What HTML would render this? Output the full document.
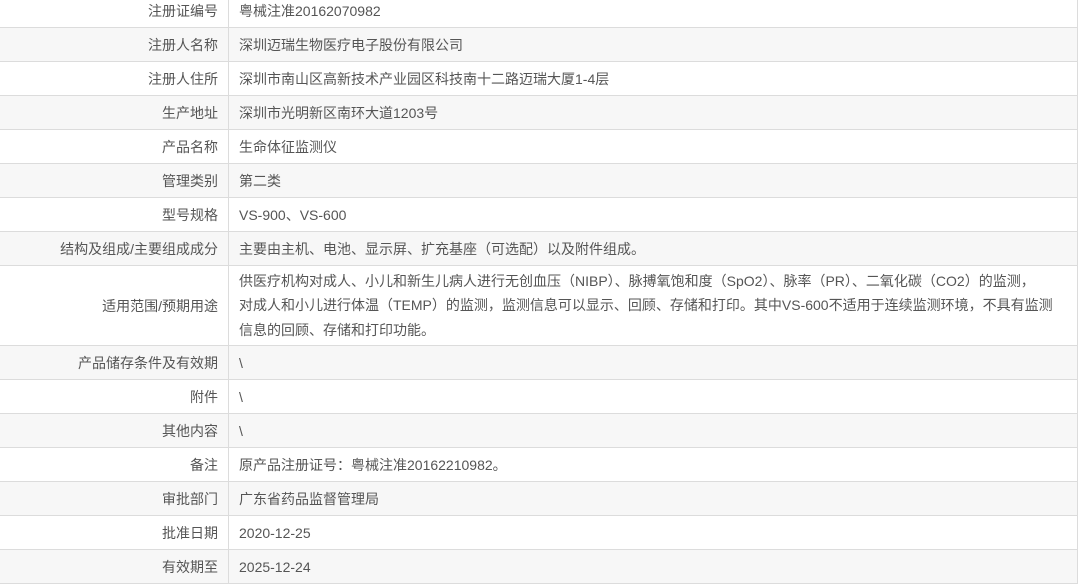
<!DOCTYPE html>
<html><head><meta charset="utf-8"><style>
html,body{margin:0;padding:0;background:#fff;width:1081px;height:588px;overflow:hidden}
table{position:absolute;left:0;top:-7px;width:1078px;border-collapse:collapse;font-family:"Liberation Sans","Noto Sans CJK SC",sans-serif;font-size:14px;color:#555}
td{border:1px solid #dcdcdc;height:33px;padding:0;line-height:22px}
td.l{width:218px;text-align:right;padding-right:10px;border-left:none}
td.v{padding-left:10px;padding-right:10px;white-space:nowrap}
tr:nth-child(even){background:#f7f7f7}
</style></head><body>
<table>
<tr><td class="l">注册证编号</td><td class="v">粤械注准20162070982</td></tr>
<tr><td class="l">注册人名称</td><td class="v">深圳迈瑞生物医疗电子股份有限公司</td></tr>
<tr><td class="l">注册人住所</td><td class="v">深圳市南山区高新技术产业园区科技南十二路迈瑞大厦1-4层</td></tr>
<tr><td class="l">生产地址</td><td class="v">深圳市光明新区南环大道1203号</td></tr>
<tr><td class="l">产品名称</td><td class="v">生命体征监测仪</td></tr>
<tr><td class="l">管理类别</td><td class="v">第二类</td></tr>
<tr><td class="l">型号规格</td><td class="v">VS-900、VS-600</td></tr>
<tr><td class="l">结构及组成/主要组成成分</td><td class="v">主要由主机、电池、显示屏、扩充基座（可选配）以及附件组成。</td></tr>
<tr><td class="l" style="height:79px">适用范围/预期用途</td><td class="v" style="line-height:24.5px">供医疗机构对成人、小儿和新生儿病人进行无创血压（NIBP）、脉搏氧饱和度（SpO2）、脉率（PR）、二氧化碳（CO2）的监测，<br>对成人和小儿进行体温（TEMP）的监测，监测信息可以显示、回顾、存储和打印。其中VS-600不适用于连续监测环境，不具有监测<br>信息的回顾、存储和打印功能。</td></tr>
<tr><td class="l">产品储存条件及有效期</td><td class="v">\</td></tr>
<tr><td class="l">附件</td><td class="v">\</td></tr>
<tr><td class="l">其他内容</td><td class="v">\</td></tr>
<tr><td class="l">备注</td><td class="v">原产品注册证号：粤械注准20162210982。</td></tr>
<tr><td class="l">审批部门</td><td class="v">广东省药品监督管理局</td></tr>
<tr><td class="l">批准日期</td><td class="v">2020-12-25</td></tr>
<tr><td class="l">有效期至</td><td class="v">2025-12-24</td></tr>
</table>
</body></html>
